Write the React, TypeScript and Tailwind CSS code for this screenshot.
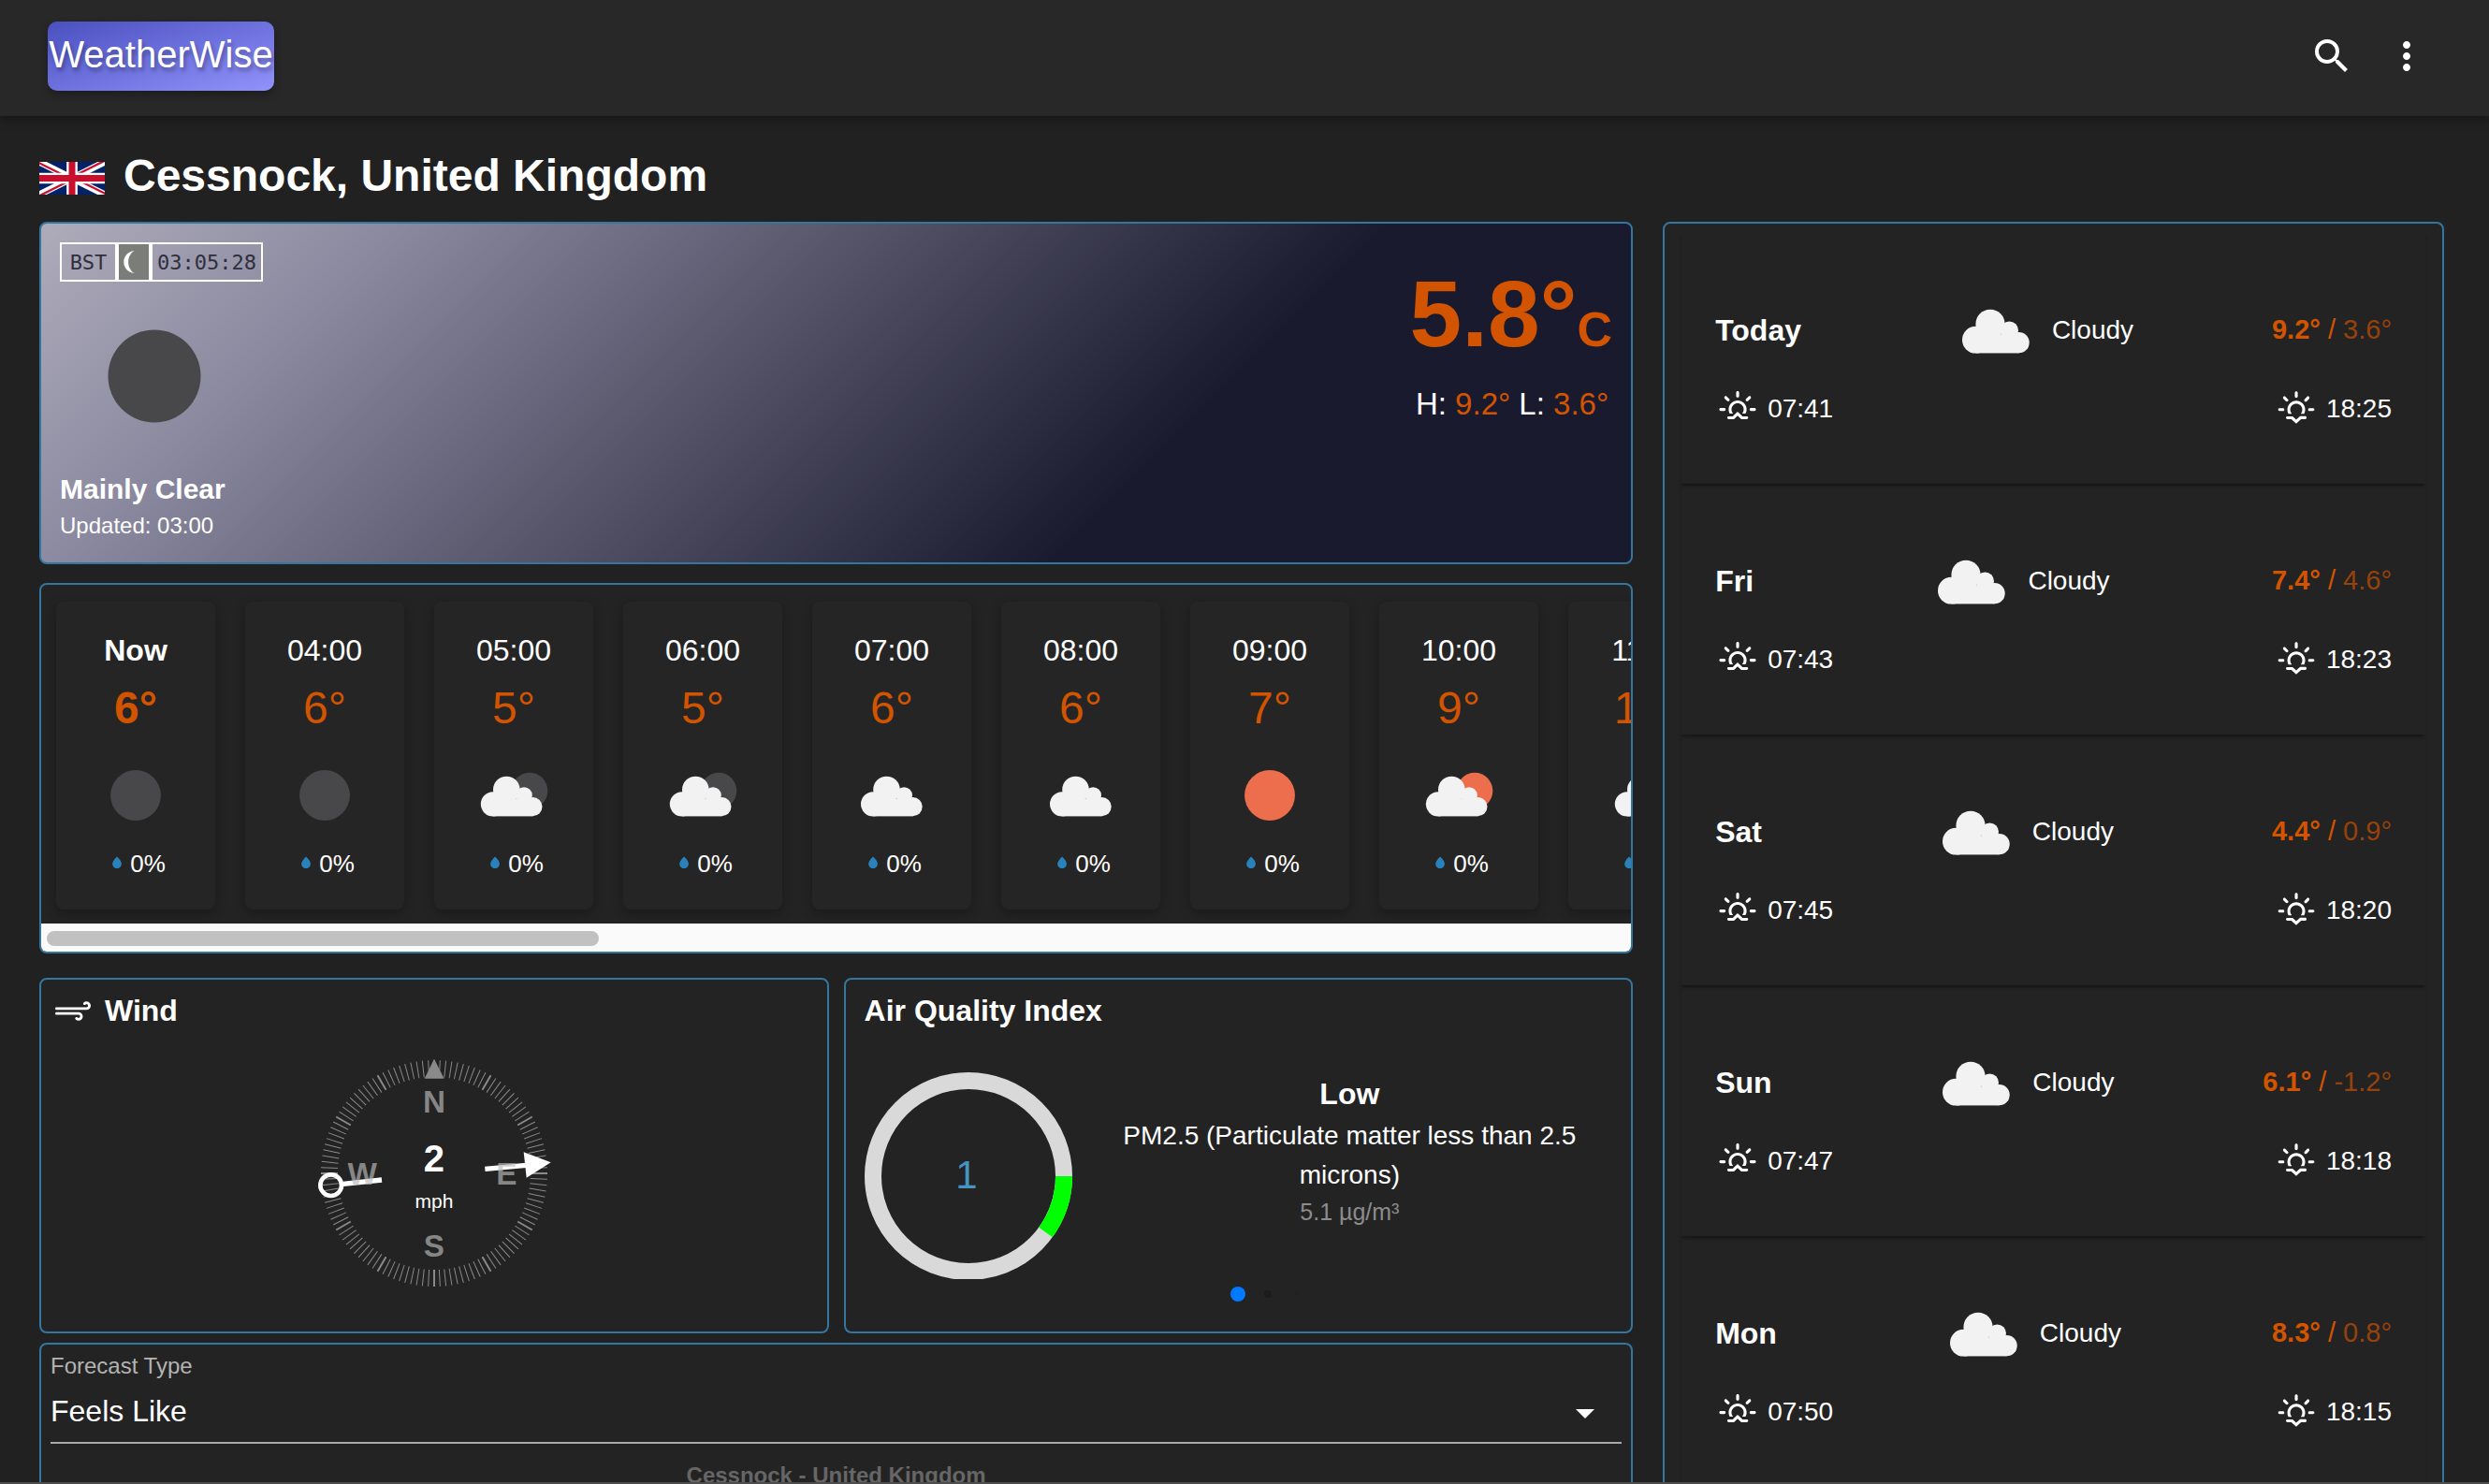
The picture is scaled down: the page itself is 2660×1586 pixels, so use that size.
import React from "react";
import { MdSearch, MdMoreVert, MdArrowDropDown } from "react-icons/md";
import { WiSunrise, WiSunset, WiStrongWind, WiRaindrop } from "react-icons/wi";

type Sky = "night" | "nightCloud" | "cloud" | "day" | "dayCloud";

const CARD = "rounded-lg border-2 border-[#33769f] bg-[#232323]";

function Cloud({ shift = 0 }: { shift?: number }) {
  return (
    <g fill="#f2f2f2" transform={`translate(${shift} -3)`}>
      <circle cx="-36" cy="20" r="24" />
      <circle cx="-10" cy="-8" r="26" />
      <circle cx="24" cy="3" r="16" />
      <circle cx="41" cy="25" r="18.5" />
      <rect x="-36" y="10" width="77" height="33.7" />
    </g>
  );
}

function SkyIcon({ sky, className }: { sky: Sky; className: string }) {
  return (
    <svg viewBox="-100 -100 200 200" className={className} aria-hidden="true">
      {sky === "night" && <circle r="49" fill="#48484a" />}
      {sky === "day" && <circle r="49" fill="#ec6e4c" />}
      {sky === "nightCloud" && <circle cx="31" cy="-9" r="35" fill="#48484a" />}
      {sky === "dayCloud" && <circle cx="31" cy="-9" r="35" fill="#ec6e4c" />}
      {(sky === "nightCloud" || sky === "dayCloud") && <Cloud shift={-4} />}
      {sky === "cloud" && <Cloud />}
    </svg>
  );
}

function Flag() {
  return (
    <svg viewBox="0 0 60 30" className="mt-1 h-[35px] w-[70px] shrink-0" role="img" aria-label="Flag of the United Kingdom">
      <clipPath id="uk-half">
        <path d="M30,15 h30 v15 z v15 h-30 z h-30 v-15 z v-15 h30 z" />
      </clipPath>
      <rect width="60" height="30" fill="#012169" />
      <path d="M0,0 L60,30 M60,0 L0,30" stroke="#fff" strokeWidth="6" />
      <path d="M0,0 L60,30 M60,0 L0,30" clipPath="url(#uk-half)" stroke="#c8102e" strokeWidth="4" />
      <path d="M30,0 v30 M0,15 h60" stroke="#fff" strokeWidth="10" />
      <path d="M30,0 v30 M0,15 h60" stroke="#c8102e" strokeWidth="6" />
    </svg>
  );
}

function Header() {
  return (
    <header className="z-10 flex h-[124px] shrink-0 items-center justify-between bg-[#282828] pr-16 pb-1 pl-[51px] shadow-[0_4px_10px_rgba(0,0,0,0.35)]">
      <a
        href="#home"
        className="flex h-[74px] w-[242px] items-center justify-center rounded-[10px] bg-linear-to-br from-[#4b50c0] to-[#9292fb] pb-1 text-[40px] leading-[40px] shadow-[0_4px_8px_rgba(0,0,0,0.3)] [text-shadow:2px_4px_4px_rgba(0,0,0,0.3)]"
      >
        WeatherWise
      </a>
      <div className="flex gap-8">
        <button type="button" aria-label="Search">
          <MdSearch className="size-12" />
        </button>
        <button type="button" aria-label="More options">
          <MdMoreVert className="size-12" />
        </button>
      </div>
    </header>
  );
}

function Current() {
  return (
    <section className="flex justify-between rounded-lg border-2 border-[#33769f] bg-[linear-gradient(135deg,#aeabba_0%,#8b8aa0_18%,#1a1a2e_70%)] p-5">
      <div>
        <div className="flex h-[42px] w-[217px] font-['DejaVu_Sans_Mono',monospace] text-[22px] text-[#2f2f3d]">
          <span className="flex w-[61px] items-center justify-center border-2 border-white">BST</span>
          <span className="flex w-9 items-center border-2 border-white bg-[#7b7e78] pl-1">
            <svg viewBox="0 0 14 26" className="h-[26px] w-[14px]" aria-hidden="true">
              <path d="M12.500 1 C-2.500 3 -2.500 23 12.500 25 C4 20 4 6 12.500 1 Z" fill="#fff" />
            </svg>
          </span>
          <time className="flex flex-1 items-center justify-center border-2 border-white">03:05:28</time>
        </div>
        <SkyIcon sky="night" className="size-[202px]" />
        <p className="text-[30px] leading-[40px] font-bold">Mainly Clear</p>
        <p className="text-2xl leading-[38px]">Updated: 03:00</p>
      </div>
      <div className="pt-[26px] text-right">
        <p className="text-[100px] leading-[100px] font-bold text-[#d35400]">
          5.8°<span className="text-[52px]">C</span>
        </p>
        <p className="mt-[6px] pr-1 text-[33px] leading-[48px]">
          H: <span className="text-[#d35400]">9.2°</span> L: <span className="text-[#d35400]">3.6°</span>
        </p>
      </div>
    </section>
  );
}

const hours: { time: string; temp: string; sky: Sky }[] = [
  { time: "Now", temp: "6°", sky: "night" },
  { time: "04:00", temp: "6°", sky: "night" },
  { time: "05:00", temp: "5°", sky: "nightCloud" },
  { time: "06:00", temp: "5°", sky: "nightCloud" },
  { time: "07:00", temp: "6°", sky: "cloud" },
  { time: "08:00", temp: "6°", sky: "cloud" },
  { time: "09:00", temp: "7°", sky: "day" },
  { time: "10:00", temp: "9°", sky: "dayCloud" },
  { time: "11:00", temp: "10°", sky: "dayCloud" },
];

function Hourly() {
  return (
    <section className={`mt-5 min-w-0 overflow-hidden ${CARD}`} aria-label="Hourly forecast">
      <ul className="flex gap-8 px-4 pt-[18px] pb-[15px]">
        {hours.map((h, i) => (
          <li
            key={h.time}
            className={`flex w-[170px] shrink-0 flex-col items-center rounded-lg bg-[#252525] pt-7 pb-[31px] shadow-[0_4px_12px_rgba(0,0,0,0.25)] ${i === 0 ? "font-bold" : ""}`}
          >
            <span className="text-[32px] leading-[48px]">{h.time}</span>
            <span className="mt-[6px] text-5xl leading-[64px] text-[#d35400]">{h.temp}</span>
            <SkyIcon sky={h.sky} className="mt-[6px] size-[110px]" />
            <span className="flex items-center pr-[2px] text-[26px] leading-[36px] font-normal">
              <WiRaindrop className="size-7 text-[#2a82bd]" />
              0%
            </span>
          </li>
        ))}
      </ul>
      <div className="h-[30px] bg-[#fafafa] px-[6px] pt-2">
        <div className="h-4 w-[35%] rounded-full bg-[#c1c1c1]" />
      </div>
    </section>
  );
}

function Compass() {
  const ticks = Array.from({ length: 120 }, (_, i) => i * 3);
  return (
    <svg viewBox="-20 13 840 840" className="mx-auto mt-[10px] size-[280px] shrink-0" role="img" aria-label="Wind 2 mph, blowing east">
      {ticks.map((a) => (
        <line
          key={a}
          x1="400"
          x2="400"
          y1="70"
          y2="124"
          stroke="#8a8a8a"
          strokeWidth={a % 30 === 0 ? 6 : 3}
          transform={`rotate(${a} 400 433)`}
        />
      ))}
      <path d="M400 66 L432 129 H369 Z" fill="#8a8a8a" />
      <g stroke="#fff" fill="none">
        <circle cx="69" cy="471" r="34" strokeWidth="14" />
        <path d="M108 467 L232 454" strokeWidth="16" />
        <path d="M563 419 L695 407" strokeWidth="16" />
      </g>
      <path d="M687 365 L774 398 L696 447 Z" fill="#fff" />
      <g fill="#bbbbbb" fillOpacity="0.66" fontSize="100" fontWeight="700" textAnchor="middle">
        <text x="400" y="237">N</text>
        <text x="400" y="700">S</text>
        <text x="170" y="468">W</text>
        <text x="632" y="468">E</text>
      </g>
      <g fill="#fff" textAnchor="middle">
        <text x="400" y="427" fontSize="120" fontWeight="700">2</text>
        <text x="400" y="545" fontSize="63">mph</text>
      </g>
    </svg>
  );
}

function Wind() {
  return (
    <section className={`flex flex-col px-[10px] py-[9px] ${CARD}`}>
      <h2 className="flex items-center gap-[10px] text-[32px] leading-[48px] font-bold">
        <WiStrongWind className="size-12" />
        Wind
      </h2>
      <Compass />
    </section>
  );
}

function AirQuality() {
  return (
    <section className={`px-5 py-[9px] ${CARD}`}>
      <h2 className="text-[32px] leading-[48px] font-bold">Air Quality Index</h2>
      <div className="mt-[41px] flex gap-4">
        <svg viewBox="0 0 222 222" className="size-[222px] shrink-0" role="img" aria-label="Index 1 of 10">
          <circle cx="111" cy="112" r="102" fill="none" stroke="#d9d9d9" strokeWidth="18" />
          <path d="M213 112 A102 102 0 0 1 193.500 172" fill="none" stroke="#00ff00" strokeWidth="18" />
          <text x="109" y="125" fontSize="42" fill="#4494c4" textAnchor="middle">1</text>
        </svg>
        <div className="flex-1 text-center">
          <p className="text-[32px] leading-[48px] font-bold">Low</p>
          <p className="text-[28px] leading-[42px]">PM2.5 (Particulate matter less than 2.5 microns)</p>
          <p className="text-[25px] leading-[36px] text-[#8c8c8c]">5.1 µg/m³</p>
        </div>
      </div>
      <div className="mt-2 grid grid-cols-[1fr_16px_1fr] items-center">
        <span className="col-start-2 size-4 rounded-full bg-[#007aff]" />
        <span className="flex items-center gap-6 pl-5">
          <span className="size-2 rounded-full bg-[#1c1c1c]" />
          <span className="size-1 rounded-full bg-[#202020]" />
        </span>
      </div>
    </section>
  );
}

function Forecast() {
  return (
    <section className={`mt-[10px] flex-1 px-[10px] pt-[7px] ${CARD}`}>
      <label htmlFor="forecast-type" className="block text-2xl leading-[32px] text-[#b3b3b3]">
        Forecast Type
      </label>
      <div className="grid items-center">
        <select
          id="forecast-type"
          defaultValue="feels"
          className="col-start-1 row-start-1 h-[67px] w-full appearance-none border-b-2 border-[#a8abab] bg-transparent pb-[2px] text-[32px] outline-none"
        >
          <option value="feels">Feels Like</option>
          <option value="temp">Temperature</option>
        </select>
        <MdArrowDropDown className="pointer-events-none col-start-1 row-start-1 mr-[15px] size-12 justify-self-end" />
      </div>
      <h3 className="mt-4 text-center text-2xl leading-[36px] font-bold text-[#666666]">Cessnock - United Kingdom</h3>
    </section>
  );
}

const days = [
  { day: "Today", high: "9.2°", low: "3.6°", rise: "07:41", set: "18:25" },
  { day: "Fri", high: "7.4°", low: "4.6°", rise: "07:43", set: "18:23" },
  { day: "Sat", high: "4.4°", low: "0.9°", rise: "07:45", set: "18:20" },
  { day: "Sun", high: "6.1°", low: "-1.2°", rise: "07:47", set: "18:18" },
  { day: "Mon", high: "8.3°", low: "0.8°", rise: "07:50", set: "18:15" },
];

function Daily() {
  return (
    <aside className={`px-[18px] pt-[10px] ${CARD}`} aria-label="Daily forecast">
      <ul>
        {days.map((d) => (
          <li key={d.day} className="px-9 pt-11 pb-14 text-[28px] shadow-[0_3px_4px_-1px_rgba(0,0,0,0.45)]">
            <div className="flex items-center justify-between">
              <h3 className="text-[32px] leading-[48px] font-bold">{d.day}</h3>
              <div className="flex items-center">
                <SkyIcon sky="cloud" className="size-[120px]" />
                Cloudy
              </div>
              <p className="text-[29px] text-[#d35400]">
                <b>{d.high}</b> / <span className="opacity-65">{d.low}</span>
              </p>
            </div>
            <div className="flex items-center justify-between leading-[48px]">
              <span className="flex items-center gap-2">
                <WiSunrise className="size-12" />
                {d.rise}
              </span>
              <span className="flex items-center gap-2">
                <WiSunset className="size-12" />
                {d.set}
              </span>
            </div>
          </li>
        ))}
      </ul>
    </aside>
  );
}

export default function App() {
  return (
    <div className="flex h-screen flex-col overflow-hidden border-b-2 border-[#4d4d4d] bg-[#212121] font-['Liberation_Sans',Arial,sans-serif] text-white">
      <Header />
      <main className="pr-12 pl-[42px]">
        <h1 className="flex items-center gap-5 pt-8 pb-[17px] text-5xl leading-[64px] font-bold">
          <Flag />
          Cessnock, United Kingdom
        </h1>
        <div className="grid grid-cols-[minmax(0,51fr)_minmax(0,25fr)] gap-8">
          <div className="flex min-w-0 flex-col">
            <Current />
            <Hourly />
            <div className="mt-[26px] grid h-[380px] grid-cols-2 gap-4">
              <Wind />
              <AirQuality />
            </div>
            <Forecast />
          </div>
          <Daily />
        </div>
      </main>
    </div>
  );
}
